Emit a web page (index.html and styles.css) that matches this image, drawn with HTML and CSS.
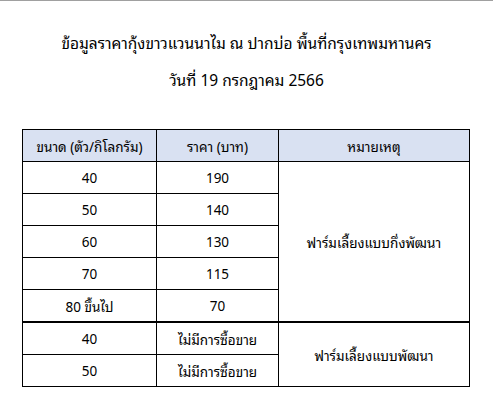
FILE: index.html
```html
<!DOCTYPE html>
<html lang="th">
<head>
<meta charset="utf-8">
<title>ข้อมูลราคากุ้งขาวแวนนาไม</title>
<link rel="stylesheet" href="styles.css">
</head>
<body>
<div class="page">
  <div class="title">
    <div class="title-line">ข้อมูลราคากุ้งขาวแวนนาไม ณ ปากบ่อ พื้นที่กรุงเทพมหานคร</div>
    <div class="title-line">วันที่ 19 กรกฎาคม 2566</div>
  </div>
  <table class="prices">
    <thead>
      <tr>
        <th class="c-size">ขนาด (ตัว/กิโลกรัม)</th>
        <th class="c-price">ราคา (บาท)</th>
        <th class="c-note">หมายเหตุ</th>
      </tr>
    </thead>
    <tbody>
      <tr><td>40</td><td>190</td><td class="note" rowspan="5">ฟาร์มเลี้ยงแบบกึ่งพัฒนา</td></tr>
      <tr><td>50</td><td>140</td></tr>
      <tr><td>60</td><td>130</td></tr>
      <tr><td>70</td><td>115</td></tr>
      <tr><td>80 ขึ้นไป</td><td>70</td></tr>
      <tr class="group"><td>40</td><td>ไม่มีการซื้อขาย</td><td class="note" rowspan="2">ฟาร์มเลี้ยงแบบพัฒนา</td></tr>
      <tr><td>50</td><td>ไม่มีการซื้อขาย</td></tr>
    </tbody>
  </table>
</div>
</body>
</html>
```
FILE: styles.css
```css
html, body {
  margin: 0;
  padding: 0;
  background: #ffffff;
}
body {
  font-family: "Noto Sans", "Noto Sans Thai Looped", "Noto Sans Thai", "DejaVu Sans", sans-serif;
  color: #000000;
  font-size: 14px;
}
.page {
  border-top: 1px solid #a0a0a0;
  height: 406px;
}
.title {
  margin-top: 24px;
  text-align: center;
  font-size: 15.5px;
}
.title-line {
  line-height: 37px;
}
.prices {
  margin: 30px 0 0 22px;
  border-collapse: collapse;
  width: 448px;
  font-size: 13.5px;
}
.prices th,
.prices td {
  border: 1px solid #000000;
  text-align: center;
  vertical-align: middle;
  padding: 0;
  height: 31px;
  font-weight: normal;
}
.prices th {
  background: #d9e1f2;
}
.c-size { width: 133px; }
.c-price { width: 121px; }
.prices .group td {
  border-top: 2px solid #000000;
}
```
